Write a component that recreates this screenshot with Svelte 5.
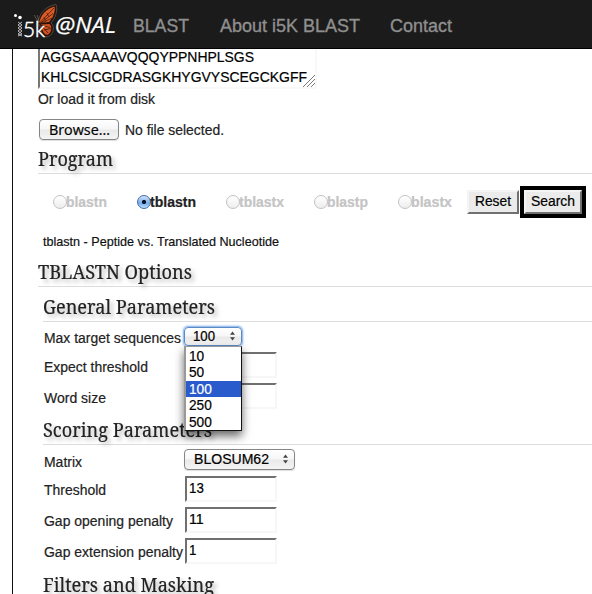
<script>
  const programs = [
    { name: 'blastn', width: 84, label: 41 },
    { name: 'tblastn', width: 89, label: 46 },
    { name: 'tblastx', width: 88, label: 45 },
    { name: 'blastp', width: 84, label: 41 },
    { name: 'blastx', width: 69, label: 41 }
  ];
  const selected = 'tblastn';
  const targets = ['10', '50', '100', '250', '500'];
  const scoring = [
    ['Threshold', '13', 62],
    ['Gap opening penalty', '11', 129],
    ['Gap extension penalty', '1', 139]
  ];
</script>

{#snippet t(text, width, size, weight = 400)}
  <svg class="t" width={width} height="20" font-size={size} font-weight={weight}>
    <text x="0" y="15" textLength={width} lengthAdjust="spacingAndGlyphs">{text}</text>
  </svg>
{/snippet}

{#snippet heading(text, width)}
  <svg class="title" width={width} height="24">
    <text x="0" y="17" textLength={width} lengthAdjust="spacingAndGlyphs">{text}</text>
  </svg>
{/snippet}

{#snippet arrows()}
  <svg class="arrows" width="7" height="10" viewBox="0 0 7 10">
    <path d="M3.5 0.500 6 3.800H1ZM3.5 9.500 1 6.200H6Z" fill="#444" />
  </svg>
{/snippet}

<div class="page">
  <nav>
    <svg class="logo" width="107" height="46" viewBox="0 0 107 46">
      <path d="M29 24C29 14 37 6 47 4.500c1.500 3 .8 9-2 14.500L42 23c4 3 3 11-2.500 13.500-4 1.500-7.500-2-8.500-11Z" fill="#2a1309" stroke="#5c5651" stroke-width=".8" />
      <path d="M30.500 23C31 15 38 8.500 45.500 6.500c1 3-.5 7-2 11l-3.500 4.500Z" fill="#dc5a25" />
      <path d="M32 24.500l8.500-.5c3 3 2 8-1.500 10.500-3 1-5.500-2-7-10Z" fill="#d35324" />
      <path d="M30.500 23 45 8M31 23.500 44 13.500M31 24l12-6M35 17.500l1.500 3M38 13l1.500 3.500M32 25l9 2.500M32 25l7 8M35 30l7-1.500" fill="none" stroke="#3a1a0d" stroke-width=".8" />
      <path d="M25 15l5 8M28 15l2.500 7" stroke="#80776e" stroke-width=".6" />
      <circle cx="6.500" cy="15.500" r="1.500" fill="#fff" />
      <circle cx="11" cy="17.500" r="1.800" fill="#fff" />
      <path d="M9 22l4 3-4 3 4 3-4 3 4 2M13 22l-4 3 4 3-4 3 4 3-4 2" fill="none" stroke="#ddd" stroke-width=".8" />
      <text class="five" x="14" y="37" textLength="22" lengthAdjust="spacingAndGlyphs">5k</text>
      <text class="nal" x="46" y="33" textLength="61" lengthAdjust="spacingAndGlyphs">@NAL</text>
    </svg>
    <div class="links">
      <span>{@render t('BLAST', 56, 18)}</span>
      <span>{@render t('About i5K BLAST', 140, 18)}</span>
      <span>{@render t('Contact', 62, 18)}</span>
    </div>
  </nav>

  <main>
    <div class="sequence">
      <div>{@render t('AGGSAAAAVQQQYPPNHPLSGS', 213, 14.2)}</div>
      <div>{@render t('KHLCSICGDRASGKHYGVYSCEGCKGFF', 266, 14.2)}</div>
      <svg class="grip" width="12" height="12"><path d="M0 12 12 0M4 12l8-8M8 12l4-4" stroke="#777" /></svg>
    </div>
    <div class="load">{@render t('Or load it from disk', 117, 14)}</div>
    <div class="file">
      <button class="mac browse">{@render t('Browse...', 61, 14)}</button>
      {@render t('No file selected.', 99, 14)}
    </div>

    <div class="head program">{@render heading('Program', 75)}</div>
    <div class="programs">
      {#each programs as p}
        <div class="choice" class:on={p.name === selected} style="width: {p.width}px">
          <i></i>{@render t(p.name, p.label, 14, 700)}
        </div>
      {/each}
      <button class="classic">{@render t('Reset', 36, 14)}</button>
      <div class="focus"><button class="classic search">{@render t('Search', 44, 14)}</button></div>
    </div>
    <div class="note">{@render t('tblastn - Peptide vs. Translated Nucleotide', 236, 12.6)}</div>
    <div class="head">{@render heading('TBLASTN Options', 154)}</div>

    <section>
      <div class="head general">{@render heading('General Parameters', 172)}</div>
      <div class="row first">
        <div class="label">{@render t('Max target sequences', 137, 14)}</div>
        <div class="mac select focused">
          {@render t('100', 22, 14)}{@render arrows()}
          <div class="menu">
            {#each targets as n}
              <div class:picked={n === '100'}>{@render t(n, n.length * 7.6, 14)}</div>
            {/each}
          </div>
        </div>
      </div>
      <div class="row">
        <div class="label">{@render t('Expect threshold', 104, 14)}</div>
        <div class="input"></div>
      </div>
      <div class="row">
        <div class="label">{@render t('Word size', 62, 14)}</div>
        <div class="input"></div>
      </div>

      <div class="head">{@render heading('Scoring Parameters', 169)}</div>
      <div class="row matrix">
        <div class="label">{@render t('Matrix', 38, 14)}</div>
        <div class="mac select wide">{@render t('BLOSUM62', 75, 14)}{@render arrows()}</div>
      </div>
      {#each scoring as [name, value, width]}
        <div class="row score">
          <div class="label">{@render t(name, width, 14)}</div>
          <div class="input filled">{@render t(value, value.length * 7.4, 14)}</div>
        </div>
      {/each}
      <div class="head last">{@render heading('Filters and Masking', 171)}</div>
    </section>
  </main>
</div>

<style>
  :global(body) { margin: 0; background: #fff; overflow: hidden; }
  .page {
    width: 592px; height: 594px; overflow: hidden;
    display: flex; flex-direction: column;
    font-family: "Liberation Sans", Arial, sans-serif; color: #222;
  }
  svg { display: block; flex: none; overflow: visible; }
  .t { fill: currentColor; stroke: currentColor; stroke-width: .2px; }
  button { font: inherit; margin: 0; color: #000; }

  nav {
    height: 48px; flex: none; box-sizing: content-box;
    display: flex; background: #1b1b1b; border-bottom: 1px solid #000;
  }
  .logo { margin-left: 9px; }
  .five { font: 300 21px Lato, "Liberation Sans", sans-serif; fill: #fff; stroke: #fff; stroke-width: .5px; }
  .nal { font: italic 22px "Open Sans", "Noto Sans", sans-serif; fill: #fff; stroke: #fff; stroke-width: .2px; }
  .links { display: flex; gap: 30px; margin-left: 17px; padding-top: 17px; color: #8f8f8f; }
  .links :global(.t) { stroke-width: .35px; }
  .links span:first-child { margin-right: 1px; }

  main {
    flex: none; height: 560px; margin-left: 12px; padding-left: 25px;
    border-left: 1px solid #111; box-sizing: border-box;
    display: flex; flex-direction: column; align-items: stretch;
  }
  main > * { flex: none; }
  .sequence {
    position: relative; box-sizing: border-box; width: 279px; height: 40px;
    border: solid #f8f8f8; border-width: 0 2px 2px 0; border-left: 2px solid #777;
    padding-left: 1px; color: #000;
  }
  .sequence div { height: 20px; }
  .sequence div :global(svg) { position: relative; top: -2px; }
  .grip { position: absolute; right: 0; bottom: 0; }
  .load { height: 20px; }
  .file { height: 41px; display: flex; align-items: center; gap: 6px; padding-left: 1px; }
  .mac {
    box-sizing: border-box; border: 1px solid #858585; border-radius: 4px;
    background: linear-gradient(#fff 0%, #f6f6f6 48%, #e9e9e9 52%, #f4f4f4 100%);
    box-shadow: 0 1px 1px #0002; color: #000;
  }
  .browse {
    width: 80px; height: 21px; padding: 0 0 0 9px; display: flex; align-items: center;
    font-family: "Open Sans", sans-serif;
  }

  .head { height: 33px; box-sizing: border-box; border-bottom: 1px solid #ddd; display: flex; align-items: flex-end; }
  .head.program { height: 24px; }
  .head.general { height: 35px; }
  .title {
    font: 19px "Noto Serif", "Droid Serif", "DejaVu Serif Condensed", "DejaVu Serif", serif;
    fill: #222; stroke: #222; stroke-width: .2px; filter: drop-shadow(3px 3px 2px #0004);
  }

  .programs { height: 56px; display: flex; align-items: center; padding-left: 15px; }
  .choice { display: flex; align-items: center; color: #c4c4c4; }
  .choice i {
    width: 14px; height: 14px; box-sizing: border-box; border: 1px solid #c3c3c3;
    border-radius: 50%; background: linear-gradient(#fff, #ededed); margin-right: -1px;
  }
  .choice.on { color: #222; }
  .choice.on i {
    border-color: #446aa8;
    background: radial-gradient(circle, #071329 0 1.800px, transparent 2.400px), linear-gradient(#d2e3fb, #74ace9 60%, #b5e1ff);
  }
  .classic {
    width: 52px; height: 24px; box-sizing: border-box; padding: 0 0 2px 6px;
    border: 2px solid; border-color: #f4f4f4 #707070 #707070 #f4f4f4;
    background: #ebebeb; display: flex; align-items: center; flex: none;
  }
  .focus { margin-left: 1px; border: 4px solid #000; }
  .search { width: 58px; padding-left: 5px; }
  .note { height: 24px; display: flex; align-items: center; padding: 0 0 2px 5px; box-sizing: border-box; color: #111; }

  section { margin-left: 5px; }
  .row { height: 31px; display: flex; align-items: flex-start; }
  .label { width: 141px; padding: 7px 0 0 1px; box-sizing: border-box; flex: none; }
  .row.first { height: 28px; }
  .first .label { padding-top: 6px; }
  .score .label { padding-top: 6px; }
  .matrix { height: 29px; }
  .input {
    width: 92px; height: 26px; margin: 2px 0 0 1px; box-sizing: border-box;
    border: 2px solid; border-color: #707070 #f7f7f7 #f7f7f7 #707070; background: #fff;
  }
  .filled { padding: 0 0 0 2px; color: #000; }
  .select { position: relative; display: flex; align-items: center; }
  .wide, .focused { padding-bottom: 1px; }
  .focused {
    width: 58px; height: 19px; margin: 5px 0 0; padding-left: 8px;
    border-color: #5b8bc6; box-shadow: 0 0 2px 1px #78a8e8;
  }
  .wide { width: 111px; height: 21px; margin-top: 4px; padding-left: 9px; }
  .arrows { margin-left: auto; margin-right: 5px; }
  .menu {
    position: absolute; z-index: 2; left: -1px; top: 18px; width: 58px; height: 85px;
    box-sizing: border-box; padding-top: 1px; background: #fff;
    border: solid #111; border-width: 1px 1px 1px 2px; border-top-color: #999; border-left-color: #999;
    box-shadow: 0 5px 9px #0009;
  }
  .menu div { height: 16.400px; padding-left: 3px; }
  .menu div :global(svg) { position: relative; top: -2px; }
  .menu .picked { background: #2a5bcc; color: #fff; }
  .last { border: 0; height: 32px; }
</style>
